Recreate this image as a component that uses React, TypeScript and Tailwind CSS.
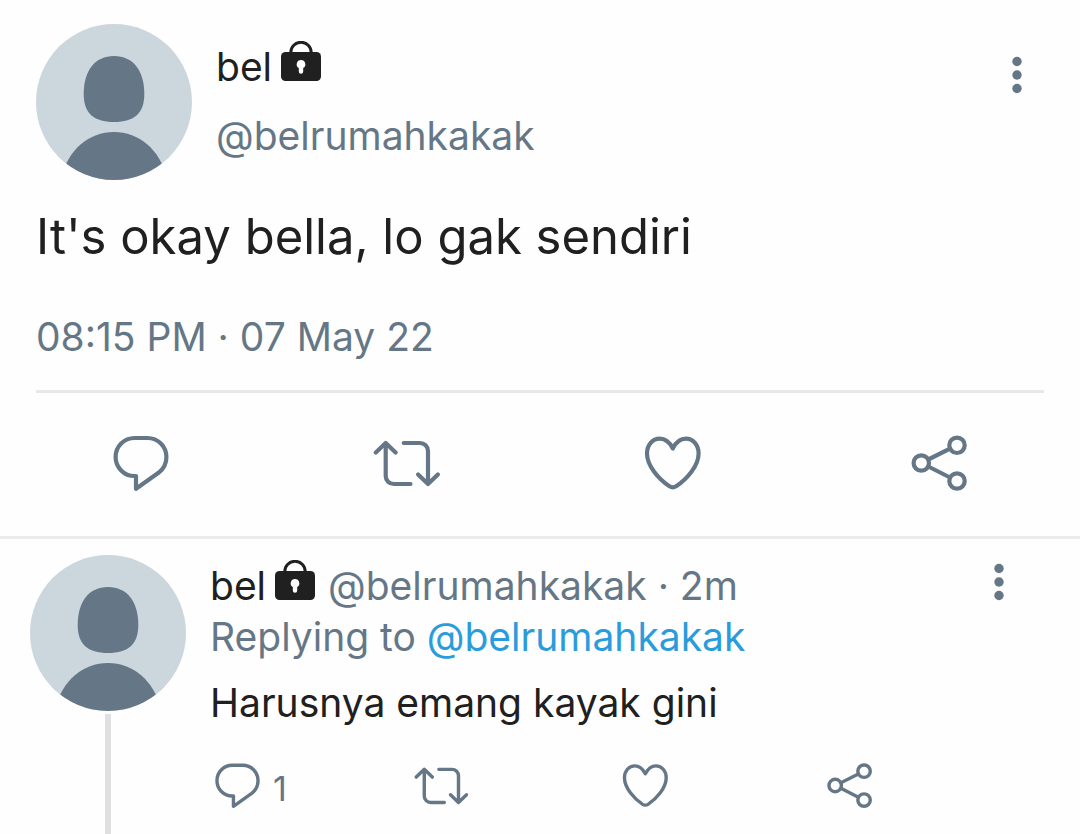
import type { ReactNode } from 'react';

function Avatar() {
  return (
    <svg viewBox="0 0 156 156" className="size-[156px] shrink-0" role="img" aria-label="bel">
      <clipPath id="avatar-clip">
        <circle cx="78" cy="78" r="78" />
      </clipPath>
      <circle cx="78" cy="78" r="78" fill="#ccd6dd" />
      <g fill="#657786" clipPath="url(#avatar-clip)">
        <path d="M78 32C97 32 108.3 46.500 108.3 70C108.3 89 98.500 98 78 98C57.500 98 47.700 89 47.700 70C47.700 46.500 59 32 78 32Z" />
        <path d="M26 152C32 126 53 108 78 108S124 126 130 152V160H26Z" />
      </g>
    </svg>
  );
}

function Lock() {
  return (
    <svg viewBox="0 0 40 40" className="size-10 shrink-0" role="img" aria-label="Protected account">
      <path d="M9.800 13V11.500a10.200 10.200 0 0 1 20.400 0V13" fill="none" stroke="#202020" strokeWidth="3" />
      <rect y="11" width="40" height="29" rx="4.500" fill="#202020" />
      <path d="M20 19a4.300 4.300 0 0 0-2.200 8V30.500a2.200 2.200 0 0 0 4.400 0V27A4.300 4.300 0 0 0 20 19Z" fill="#fefefe" />
    </svg>
  );
}

function More() {
  return (
    <button type="button" aria-label="More" className="size-[54px] shrink-0 text-[#657786]">
      <svg viewBox="0 0 54 54" className="size-full" fill="currentColor">
        <circle cx="27" cy="13.500" r="4.700" />
        <circle cx="27" cy="27" r="4.700" />
        <circle cx="27" cy="40.500" r="4.700" />
      </svg>
    </button>
  );
}

const icons: { label: string; shape: ReactNode }[] = [
  {
    label: 'Reply',
    shape: <path d="M29.500 11H42.500C53 11 61.400 19.500 61.400 30.200C61.400 36.500 58.500 42 53.500 45.800L31 61.700V49H29.500C19 49 10.600 40.500 10.600 30S19 11 29.500 11Z" />,
  },
  {
    label: 'Retweet',
    shape: (
      <>
        <path d="M4.800 25.600L14.700 16L24.600 25.600M14.700 16.500V49a8 8 0 0 0 8 8H39.500" />
        <path d="M32.700 16H49a8 8 0 0 1 8 8V56.500M47.100 47.400L57 57L66.900 47.400" />
      </>
    ),
  },
  {
    label: 'Like',
    shape: <path d="M35.800 21.500C32.500 15 28.500 11.700 22.800 11.700C15.500 11.700 10 18 10 26.500C10 39 22 52.500 32.500 59.300Q35.800 61.300 39.100 59.300C49.600 52.500 61.600 39 61.600 26.500C61.600 18 56.100 11.700 48.800 11.700C43.100 11.700 39.100 15 35.800 21.500Z" />,
  },
  {
    label: 'Share',
    shape: (
      <>
        <circle cx="18.300" cy="36" r="7.700" />
        <circle cx="54" cy="18.300" r="7.700" />
        <circle cx="54" cy="54" r="7.700" />
        <path d="M25.300 32.500L47 21.700M25.300 39.500L47 50.500" />
      </>
    ),
  },
];

function Icon({ shape, className }: { shape: ReactNode; className: string }) {
  return (
    <svg
      viewBox="2 2 68 68"
      className={className}
      fill="none"
      stroke="#657786"
      strokeWidth="4.200"
      strokeLinecap="round"
      strokeLinejoin="round"
    >
      {shape}
    </svg>
  );
}

export default function App() {
  return (
    <main className="flex min-h-screen flex-col bg-[#fefefe] font-['Inter',sans-serif] text-[39px] leading-[51px] text-[#202020]">
      <article>
        <div className="px-9 pt-6">
          <header className="flex items-start gap-6">
            <Avatar />
            <div className="mt-[17px] flex min-w-0 flex-1 flex-col gap-[18px]">
              <div className="flex items-center gap-[9px]">
                <span>bel</span>
                <span className="-mt-3"><Lock /></span>
              </div>
              <a href="#profile" className="text-[#657786]">@belrumahkakak</a>
            </div>
            <div className="mt-6 flex"><More /></div>
          </header>
          <p className="mt-[25px] text-[49px] leading-[64px]">It's okay bella, lo gak sendiri</p>
          <p className="mt-[42px] text-[#657786]">
            <time dateTime="2022-05-07T20:15">08:15 PM · 07 May 22</time>
          </p>
          <hr className="mt-7 border-t-[3px] border-[#e8e8e8]" />
        </div>
        <div className="grid grid-cols-4 justify-items-center border-b-[3px] border-[#ebebeb] px-2 pt-9 pb-[39px]">
          {icons.map(({ label, shape }) => (
            <button key={label} type="button" aria-label={label}>
              <Icon shape={shape} className="size-[68px]" />
            </button>
          ))}
        </div>
      </article>

      <article className="flex flex-1 gap-6 pt-4 pr-[54px] pl-[30px]">
        <div className="flex flex-col items-center gap-[3px]">
          <Avatar />
          <div className="w-1.5 flex-1 bg-[#e0e0e0]" />
        </div>
        <div className="min-w-0 flex-1 pb-5">
          <div className="flex items-start justify-between">
            <div className="mt-[5px]">
              <div className="flex items-center gap-[9px]">
                <span>bel</span>
                <span className="-mt-3"><Lock /></span>
                <span className="ml-1 text-[#657786]">@belrumahkakak · 2m</span>
              </div>
              <p className="text-[#657786]">
                Replying to <a href="#profile" className="text-[#2b9cdb]">@belrumahkakak</a>
              </p>
            </div>
            <More />
          </div>
          <p className="mt-[15px]">Harusnya emang kayak gini</p>
          <div className="mt-[30px] grid grid-cols-4">
            {icons.map(({ label, shape }) => (
              <button key={label} type="button" aria-label={label} className="flex items-end gap-2">
                <Icon shape={shape} className="size-[55px]" />
                {label === 'Reply' && <span className="text-[34px] leading-[48px] text-[#657786]">1</span>}
              </button>
            ))}
          </div>
        </div>
      </article>
    </main>
  );
}
